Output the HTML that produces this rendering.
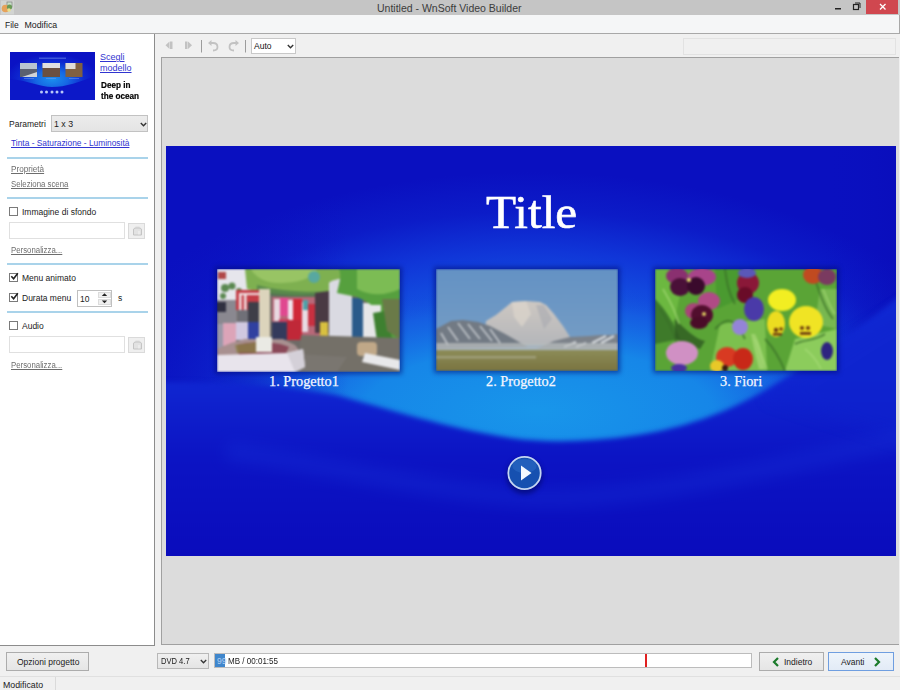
<!DOCTYPE html>
<html><head><meta charset="utf-8">
<style>
*{margin:0;padding:0;box-sizing:border-box}
html,body{width:900px;height:690px;overflow:hidden;background:#f0f0f0;font-family:"Liberation Sans",sans-serif;font-size:8.5px;color:#1a1a1a}
.a{position:absolute}
.t{position:absolute;white-space:nowrap;line-height:1}
#titlebar{left:0;top:0;width:900px;height:15px;background:#c5c5c5}
#menubar{left:0;top:15px;width:900px;height:19px;background:#f5f6f7;border-bottom:1px solid #a8a8a8;border-right:1px solid #a8a8a8}
#left{left:0;top:34px;width:155px;height:612px;background:#fff;border-right:1px solid #8c8c8c;border-bottom:1px solid #8c8c8c}
#preview{left:161px;top:57px;width:738px;height:588px;background:#dcdcdc;border-top:1px solid #a0a0a0;border-left:1px solid #a0a0a0;border-bottom:1px solid #a0a0a0}
#slide{left:166px;top:146px;width:730px;height:410px;background:#0a0ec0;overflow:hidden}
.lnk{color:#3034d0;text-decoration:underline}
.glnk{color:#6d6d6d;text-decoration:underline}
.sep{position:absolute;left:7px;width:141px;height:2px;background:#a9d3ea}
.cb{position:absolute;left:9px;width:9px;height:9px;border:1px solid #7a7a7a;background:#fff}
.tb{position:absolute;left:9px;width:116px;height:17px;border:1px solid #e0e0e0;background:#fff}
.bb{position:absolute;left:128px;width:17px;height:16px;border:1px solid #dadada;background:#efefef}
.btn{position:absolute;border:1px solid #acacac;background:linear-gradient(#f0f0f0,#e5e5e5);}
.cap{position:absolute;font-family:"Liberation Serif",serif;color:#f4f6ff;font-size:14.3px;white-space:nowrap;line-height:1;-webkit-text-stroke:0.25px #f4f6ff}
</style></head><body>
<div id="titlebar" class="a">
  <div class="t" style="left:377px;top:2.5px;font-size:10.5px;color:#3c3c3c">Untitled - WnSoft Video Builder</div>
</div>
<div id="menubar" class="a">
  <div class="t" style="left:5px;top:6px">File</div>
  <div class="t" style="left:24.5px;top:6px;font-size:8.8px">Modifica</div>
</div>
<div id="left" class="a">
  <svg class="a" style="left:10px;top:18px" width="85" height="48" viewBox="0 0 85 48">
    <defs>
      <radialGradient id="tg" cx="42" cy="27" r="46" gradientUnits="userSpaceOnUse" gradientTransform="translate(42 27) scale(1 0.55) translate(-42 -27)">
        <stop offset="0" stop-color="#1a90ee"/><stop offset="0.35" stop-color="#1668e4"/><stop offset="0.7" stop-color="#0e28d0"/><stop offset="1" stop-color="#0a12c4"/>
      </radialGradient>
      <filter id="tb" color-interpolation-filters="sRGB"><feGaussianBlur stdDeviation="0.35"/></filter>
    </defs>
    <rect width="85" height="48" fill="url(#tg)"/>
    <path d="M0,27 C20,29 30,35 42,35 C56,35 70,30 85,24 L85,48 L0,48Z" fill="#0c18c8" filter="url(#tb)"/>
    <rect x="29" y="5.5" width="27" height="1.5" fill="#8aa4f0" opacity="0.4"/>
    <g filter="url(#tb)">
    <rect x="10" y="11" width="17" height="14" fill="#5a6070"/>
    <rect x="10" y="11" width="17" height="6" fill="#b8c4d0"/>
    <path d="M12,25 L27,20 L27,25Z" fill="#d0d4d8"/>
    <rect x="32.5" y="11" width="17.5" height="14" fill="#6a5040"/>
    <rect x="32.5" y="11" width="17.5" height="5" fill="#e0e0e0"/>
    <rect x="55.5" y="11" width="17" height="14" fill="#806040"/>
    <rect x="55.5" y="11" width="10" height="6" fill="#e0dcd8"/>
    </g>
    <g fill="#7a9af0" opacity="0.5"><rect x="14" y="26" width="10" height="1"/><rect x="36" y="26" width="10" height="1"/><rect x="59" y="26" width="10" height="1"/></g>
    <g fill="#b8c8f8"><circle cx="31.5" cy="40" r="1.5"/><circle cx="36.5" cy="40" r="1.5"/><circle cx="42" cy="40" r="1.5"/><circle cx="47" cy="40" r="1.5"/><circle cx="52" cy="40" r="1.5"/></g>
  </svg>
  <div class="t lnk" style="left:100px;top:19px;font-size:9px">Scegli</div>
  <div class="t lnk" style="left:100px;top:30px;font-size:9px">modello</div>
  <div class="t" style="left:100.5px;top:46.5px;font-size:8.6px;font-weight:bold;color:#000;-webkit-text-stroke:0.2px #000;transform:scaleX(0.95);transform-origin:0 0">Deep in</div>
  <div class="t" style="left:100.5px;top:57.5px;font-size:8.6px;font-weight:bold;color:#000;-webkit-text-stroke:0.2px #000;transform:scaleX(0.95);transform-origin:0 0">the ocean</div>

  <div class="t" style="left:9px;top:86px">Parametri</div>
  <div class="a" style="left:51px;top:81px;width:97px;height:17px;border:1px solid #c2c2c2;background:linear-gradient(#ececec,#e4e4e4)">
    <div class="t" style="left:2px;top:4px;font-size:8.8px">1 x 3</div>
    <svg class="a" style="left:88px;top:6px" width="7" height="5" viewBox="0 0 7 5"><path d="M0.8,1 L3.5,3.8 L6.2,1" fill="none" stroke="#333" stroke-width="1.4"/></svg>
  </div>
  <div class="t lnk" style="left:11px;top:105px;font-size:8.4px">Tinta - Saturazione - Luminosità</div>
  <div class="sep" style="top:123px"></div>
  <div class="t glnk" style="left:11px;top:131px;font-size:8.5px;transform:scaleX(0.96);transform-origin:0 0">Proprietà</div>
  <div class="t glnk" style="left:11px;top:145.5px;font-size:8.5px;transform:scaleX(0.92);transform-origin:0 0">Seleziona scena</div>
  <div class="sep" style="top:163px"></div>

  <div class="cb" style="top:173px"></div>
  <div class="t" style="left:22px;top:174px">Immagine di sfondo</div>
  <div class="tb" style="top:188px"></div>
  <div class="bb" style="top:189px"><svg class="a" style="left:3px;top:1px" width="11" height="12" viewBox="0 0 11 12"><path d="M1.5,5 C1.5,3.5 2.5,3 4,3 L7,3 C8.5,3 9.5,3.5 9.5,5 L9.5,10 L1.5,10 Z" fill="#e2e2e2" stroke="#c4c4c4" stroke-width="1"/><path d="M3.5,2.2 L7.5,2.2" stroke="#d0d0d0" stroke-width="1"/><path d="M7,6 L7,9.5" stroke="#f4f4f4" stroke-width="1"/></svg></div>
  <div class="t glnk" style="left:11px;top:211.5px;font-size:8.5px;transform:scaleX(0.92);transform-origin:0 0">Personalizza...</div>
  <div class="sep" style="top:229px"></div>

  <div class="cb" style="top:239px"></div>
  <svg class="a" style="left:10px;top:238px" width="9" height="9" viewBox="0 0 9 9"><path d="M1.3,4.3 L3.6,6.8 L7.8,1.2" fill="none" stroke="#222" stroke-width="1.6"/></svg>
  <div class="t" style="left:22px;top:240px">Menu animato</div>
  <div class="cb" style="top:259px"></div>
  <svg class="a" style="left:10px;top:258px" width="9" height="9" viewBox="0 0 9 9"><path d="M1.3,4.3 L3.6,6.8 L7.8,1.2" fill="none" stroke="#222" stroke-width="1.6"/></svg>
  <div class="t" style="left:22px;top:260px">Durata menu</div>
  <div class="a" style="left:77px;top:256px;width:35px;height:17px;border:1px solid #c0c0c0;background:#fff">
    <div class="t" style="left:2px;top:3.5px;color:#222">10</div>
    <div class="a" style="left:20px;top:1px;width:13px;height:6px;border:1px solid #dcdcdc;background:#f0f0f0"></div>
    <div class="a" style="left:20px;top:8px;width:13px;height:6px;border:1px solid #dcdcdc;background:#f0f0f0"></div>
    <svg class="a" style="left:20px;top:0px" width="13" height="15" viewBox="0 0 13 15"><path d="M3.8,5 L6.5,2.2 L9.2,5Z M3.8,9.5 L9.2,9.5 L6.5,12.3Z" fill="#222"/></svg>
  </div>
  <div class="t" style="left:118px;top:260px">s</div>
  <div class="sep" style="top:277px"></div>

  <div class="cb" style="top:287px"></div>
  <div class="t" style="left:22px;top:288px">Audio</div>
  <div class="tb" style="top:302px"></div>
  <div class="bb" style="top:303px"><svg class="a" style="left:3px;top:1px" width="11" height="12" viewBox="0 0 11 12"><path d="M1.5,5 C1.5,3.5 2.5,3 4,3 L7,3 C8.5,3 9.5,3.5 9.5,5 L9.5,10 L1.5,10 Z" fill="#e2e2e2" stroke="#c4c4c4" stroke-width="1"/><path d="M3.5,2.2 L7.5,2.2" stroke="#d0d0d0" stroke-width="1"/><path d="M7,6 L7,9.5" stroke="#f4f4f4" stroke-width="1"/></svg></div>
  <div class="t glnk" style="left:11px;top:326.5px;font-size:8.5px;transform:scaleX(0.92);transform-origin:0 0">Personalizza...</div>
</div>
<div id="preview" class="a"></div>
<div id="slide" class="a">
<svg width="730" height="410" viewBox="0 0 730 410" style="position:absolute;left:0;top:0">
<defs>
  <radialGradient id="rgTop" cx="365" cy="290" r="480" gradientUnits="userSpaceOnUse" gradientTransform="translate(365 290) scale(1 0.55) translate(-365 -290)">
    <stop offset="0" stop-color="#1e8ef0"/>
    <stop offset="0.25" stop-color="#1474ea"/>
    <stop offset="0.5" stop-color="#1458e2"/>
    <stop offset="0.7" stop-color="#1036d8"/>
    <stop offset="0.85" stop-color="#0c1cc8"/>
    <stop offset="1" stop-color="#0a10c0"/>
  </radialGradient>
  <linearGradient id="lgEdge" x1="0" y1="0" x2="730" y2="0" gradientUnits="userSpaceOnUse">
    <stop offset="0" stop-color="#0a10c0" stop-opacity="0.75"/>
    <stop offset="0.12" stop-color="#0a10c0" stop-opacity="0.5"/>
    <stop offset="0.25" stop-color="#0a10c0" stop-opacity="0"/>
    <stop offset="0.9" stop-color="#0a10c0" stop-opacity="0"/>
    <stop offset="1" stop-color="#0a0cb8" stop-opacity="0.5"/>
  </linearGradient>
  <radialGradient id="rgBand" cx="372" cy="265" r="350" gradientUnits="userSpaceOnUse" gradientTransform="translate(372 265) scale(1 0.36) translate(-372 -265)">
    <stop offset="0" stop-color="#1896ea"/>
    <stop offset="0.5" stop-color="#1688e8" stop-opacity="0.95"/>
    <stop offset="0.8" stop-color="#1664e2" stop-opacity="0.5"/>
    <stop offset="1" stop-color="#1240d8" stop-opacity="0"/>
  </radialGradient>
  <linearGradient id="lgDark" x1="0" y1="230" x2="0" y2="410" gradientUnits="userSpaceOnUse">
    <stop offset="0" stop-color="#1028d2"/>
    <stop offset="0.45" stop-color="#0c14c4"/>
    <stop offset="1" stop-color="#0a0cbc"/>
  </linearGradient>
  <filter id="blur3" filterUnits="userSpaceOnUse" x="-60" y="-60" width="850" height="530" color-interpolation-filters="sRGB"><feGaussianBlur stdDeviation="2.5"/></filter>
  <filter id="blur6" filterUnits="userSpaceOnUse" x="-60" y="-60" width="850" height="530" color-interpolation-filters="sRGB"><feGaussianBlur stdDeviation="8"/></filter>
  <filter id="shadow" filterUnits="userSpaceOnUse" x="-60" y="-60" width="850" height="530" color-interpolation-filters="sRGB"><feGaussianBlur stdDeviation="2.5"/></filter>
</defs>
<rect width="730" height="410" fill="#0a12c4"/>
<rect width="730" height="410" fill="url(#rgTop)"/>
<rect width="730" height="410" fill="url(#rgBand)"/>
<rect width="730" height="410" fill="url(#lgEdge)"/>
<path d="M-20,236 C60,236 120,240 170,249 C220,262 280,282 345,292 C400,300 480,292 527,276 C570,263 610,240 660,205 C690,185 720,160 760,130 L760,430 L-20,430 Z" fill="url(#lgDark)" filter="url(#blur3)"/>
<path d="M600,250 C640,225 680,195 760,150 L760,300 Z" fill="#0e22ce" opacity="0.5" filter="url(#blur6)"/>
<path d="M60,305 C160,318 260,345 365,352 C470,356 600,322 740,292" fill="none" stroke="#1a3ade" stroke-width="18" opacity="0.3" filter="url(#blur6)"/>
<!-- photo shadows -->
<g fill="#000870" opacity="0.55" filter="url(#shadow)">
  <rect x="49" y="121" width="187" height="107"/>
  <rect x="268" y="121" width="186" height="106"/>
  <rect x="487" y="121" width="186" height="106"/>
</g>
<!-- play button -->
<g transform="translate(358.5 327)">
  <circle r="18" fill="#000660" opacity="0.6" filter="url(#blur3)" cy="3"/>
  <circle r="16.2" fill="#1650b0" stroke="#c4d6f2" stroke-width="1.8"/>
  <ellipse cx="0" cy="-7" rx="12" ry="7" fill="#3f86d8" opacity="0.3"/>
  <path d="M-3.5,-7.6 L7,0 L-3.5,7.6 Z" fill="#f4f8ff"/>
</g>
</svg>
<div class="t" style="left:319.5px;top:43.5px;font-family:'Liberation Serif',serif;font-size:46px;color:#fff;-webkit-text-stroke:0.6px #fff;transform:scaleX(1.07);transform-origin:0 0">Title</div>
<div class="cap" style="left:103px;top:227.5px">1. Progetto1</div>
<div class="cap" style="left:320px;top:227.5px">2. Progetto2</div>
<div class="cap" style="left:554px;top:227.5px">3. Fiori</div>
<svg class="a" id="ph1" style="left:51px;top:123px" width="183" height="103" viewBox="0 0 183 103">
<defs><filter id="pb1" color-interpolation-filters="sRGB"><feGaussianBlur stdDeviation="0.8"/></filter></defs>
<g filter="url(#pb1)">
<rect width="183" height="103" fill="#6e6a66"/>
<!-- sky / upper left -->
<rect x="0" y="0" width="40" height="34" fill="#e6e6ec"/>
<rect x="1" y="3" width="8" height="7" fill="#b04848"/>
<!-- tree canopy -->
<path d="M28,0 L135,0 L135,26 C120,28 100,24 85,26 C70,26 50,24 30,20 Z" fill="#7eb050"/>
<path d="M34,0 L100,0 C96,10 80,14 62,14 C48,14 38,8 34,0Z" fill="#98c464"/>
<path d="M40,16 C60,22 90,24 120,22 L120,30 C90,30 60,28 40,24Z" fill="#4a7a48" opacity="0.7"/>
<ellipse cx="97" cy="8" rx="6" ry="6" fill="#58a8a0"/>
<g fill="#5a8850"><circle cx="8" cy="19" r="4"/><circle cx="15" cy="17" r="3.5"/><circle cx="22" cy="22" r="3"/><circle cx="6" cy="27" r="3"/></g>
<!-- left bottom gray -->
<rect x="0" y="31" width="20" height="24" fill="#8a8890"/>
<rect x="0" y="33" width="9" height="10" fill="#303040"/>
<!-- door frame -->
<rect x="19" y="21" width="24" height="20" fill="#c43c46"/>
<rect x="22" y="25" width="2.5" height="16" fill="#f2e8ea"/>
<rect x="27" y="25" width="2.5" height="16" fill="#f2e8ea"/>
<rect x="22" y="24" width="21" height="2" fill="#f2e8ea"/>
<rect x="21" y="41" width="22" height="12" fill="#707078"/>
<rect x="31" y="33" width="12" height="22" fill="#3e3e48"/>
<!-- merchandise -->
<rect x="55" y="28" width="48" height="40" fill="#b86878"/>
<rect x="57" y="30" width="6" height="22" fill="#e8d8e0"/>
<rect x="63" y="29" width="8" height="18" fill="#e04890"/>
<rect x="71" y="31" width="5" height="26" fill="#f0e4ec"/>
<rect x="76" y="30" width="9" height="36" fill="#d02838"/>
<rect x="85" y="33" width="6" height="30" fill="#e8dce4"/>
<rect x="91" y="35" width="7" height="22" fill="#c83040"/>
<rect x="86" y="31" width="5" height="10" fill="#50a0a8"/>
<rect x="62" y="50" width="10" height="18" fill="#c84060"/>
<!-- dark figure -->
<path d="M98,24 L112,22 L112,64 L98,64Z" fill="#4a3a44"/>
<rect x="103" y="53" width="8" height="14" fill="#d8c040"/>
<!-- white wall, blue door -->
<path d="M112,14 C115,10 130,8 135,12 L135,72 L112,72Z" fill="#dadae2"/>
<rect x="135" y="29" width="11" height="43" fill="#2a5a8a"/>
<rect x="146" y="34" width="16" height="41" fill="#e4e4e6"/>
<!-- vines -->
<path d="M122,0 L183,0 L183,98 L172,92 C168,80 165,60 162,45 C158,36 148,32 140,28 L120,24 C122,14 125,8 122,0Z" fill="#56a03e"/>
<path d="M140,0 L183,0 L183,20 C170,26 155,28 140,20Z" fill="#7cbc54"/>
<rect x="146" y="36" width="18" height="40" fill="#e6e6e8"/>
<path d="M156,44 L168,42 L180,88 L162,86Z" fill="#3e8030"/>
<path d="M165,30 L183,30 L183,70 L170,62Z" fill="#6a7a48"/>
<!-- people -->
<rect x="0" y="55" width="6" height="28" fill="#9a98a8"/>
<rect x="6" y="54" width="13" height="23" fill="#dca4b8"/>
<rect x="19" y="53" width="12" height="18" fill="#d0c8e0"/>
<rect x="31" y="53" width="11" height="17" fill="#3040a0"/>
<rect x="55" y="53" width="17" height="18" fill="#343a5c"/>
<rect x="70" y="51" width="14" height="20" fill="#c02838"/>
<!-- column -->
<rect x="42" y="20" width="11" height="52" fill="#dcd4bc"/>
<!-- ground -->
<path d="M84,66 L183,69 L183,103 L80,103 Z" fill="#747068"/>
<path d="M80,85 L130,88 L120,103 L80,103Z" fill="#7a7670"/>
<rect x="140" y="73" width="20" height="14" fill="#c0a888" rx="4"/>
<path d="M148,84 L183,91 L183,101 L145,93 Z" fill="#e8e8ea"/>
<!-- basin -->
<path d="M14,74 L28,70 L66,70 L78,76 L86,86 L0,88 L0,80Z" fill="#a89090"/>
<path d="M20,76 C34,72 60,72 72,78 L68,86 L22,86Z" fill="#8a4858"/>
<path d="M18,76 L40,73 L40,84 L20,84Z" fill="#8a8048" opacity="0.8"/>
<rect x="39" y="68" width="16" height="15" fill="#eaeae4"/>
<path d="M0,86 L70,84 L86,80 L88,98 L78,103 L0,103 Z" fill="#e8e4ec"/>
<path d="M70,84 L86,80 L88,98 L78,103Z" fill="#d4d0d8"/>
</g>
</svg>
<svg class="a" id="ph2" style="left:270px;top:123px" width="182" height="102" viewBox="0 0 182 102">
<defs>
<linearGradient id="sky2" x1="0" y1="0" x2="0" y2="1"><stop offset="0" stop-color="#6492c4"/><stop offset="0.7" stop-color="#749cc4"/><stop offset="1" stop-color="#86a8c8"/></linearGradient>
<linearGradient id="mt2" x1="0" y1="0" x2="0" y2="1"><stop offset="0" stop-color="#cec8c2"/><stop offset="1" stop-color="#b4b6ba"/></linearGradient>
<linearGradient id="gr2" x1="0" y1="0" x2="0" y2="1"><stop offset="0" stop-color="#8c8c58"/><stop offset="1" stop-color="#7a7440"/></linearGradient>
<filter id="pb2" color-interpolation-filters="sRGB"><feGaussianBlur stdDeviation="0.8"/></filter>
</defs>
<g filter="url(#pb2)">
<rect width="182" height="102" fill="url(#sky2)"/>
<path d="M50,52 L60,46 L70,38 L76,33 L90,32 L104,33 L110,36 L118,45 L127,57 L134,68 L140,76 L48,76 Z" fill="url(#mt2)"/>
<path d="M76,33 L90,32 L95,45 L86,58 L78,48 Z" fill="#ddd6cc" opacity="0.7"/>
<path d="M100,36 L108,36 L116,50 L108,60Z" fill="#a8aab0" opacity="0.6"/>
<path d="M0,60 L15,52 L27,51 L42,53 L54,57 L71,66 L83,73 L92,78 L0,80 Z" fill="#727a84"/>
<g stroke="#d0d4d8" stroke-width="1.6" opacity="0.85">
<path d="M12,58 L22,72"/><path d="M22,54 L34,70"/><path d="M32,55 L44,70"/><path d="M44,57 L56,72"/><path d="M54,60 L64,74"/><path d="M5,64 L12,76"/>
</g>
<path d="M118,72 L134,68 L153,67 L165,66 L175,66 L182,65 L182,80 L100,80Z" fill="#7c828a"/>
<g stroke="#e0e4e8" stroke-width="2" opacity="0.9">
<path d="M156,74 L170,67"/><path d="M165,74 L178,67"/><path d="M128,78 L140,73"/><path d="M140,78 L150,74"/>
</g>
<path d="M0,74 L182,74 L182,81 L0,81Z" fill="#b8bcbc" opacity="0.75"/>
<rect x="0" y="81" width="182" height="21" fill="url(#gr2)"/>
<rect x="0" y="87" width="100" height="2.5" fill="#b0b098" opacity="0.6"/>
</g>
</svg>
<svg class="a" id="ph3" style="left:489px;top:123px" width="182" height="102" viewBox="0 0 182 102">
<defs><filter id="pb3" color-interpolation-filters="sRGB"><feGaussianBlur stdDeviation="0.9"/></filter></defs>
<g filter="url(#pb3)">
<rect width="182" height="102" fill="#5aa436"/>
<path d="M0,0 L30,0 L20,50 L0,70Z" fill="#6cb840"/>
<path d="M60,0 L90,0 L85,30 L62,40Z" fill="#4a9a30"/>
<path d="M0,30 C10,40 20,55 25,70 L0,75Z" fill="#3e7a2a"/>
<path d="M65,55 L110,50 L112,102 L55,102Z" fill="#7cc04e"/>
<path d="M140,70 L182,60 L182,102 L130,102Z" fill="#8ccc5c"/>
<path d="M165,20 L182,20 L182,60 L160,55Z" fill="#78b850"/>
<path d="M20,50 C30,60 40,70 50,72 L45,80 L20,70Z" fill="#2e5a22" opacity="0.8"/>
<path d="M100,65 C105,75 108,85 110,100 L104,100 C100,85 98,75 96,65Z" fill="#a8d878" opacity="0.7"/>
<g stroke="#3a7028" stroke-width="2" fill="none" opacity="0.7">
<path d="M5,40 C12,50 18,62 22,75"/><path d="M60,60 C70,50 78,45 90,70"/><path d="M110,70 C120,80 125,90 130,102"/><path d="M160,10 C165,25 170,40 178,50"/><path d="M70,0 C72,15 74,25 80,35"/><path d="M140,75 C150,70 160,72 170,65"/>
</g>
<g stroke="#a8dc78" stroke-width="1.6" fill="none" opacity="0.7">
<path d="M8,20 C14,30 20,40 24,55"/><path d="M100,70 C105,80 108,90 112,100"/><path d="M150,80 C158,86 162,92 166,100"/><path d="M168,20 C172,30 176,40 180,45"/>
</g>
<!-- pansy A -->
<ellipse cx="22" cy="7" rx="11" ry="8" fill="#8a3070"/>
<ellipse cx="47" cy="8" rx="14" ry="9" fill="#a8448a"/>
<ellipse cx="25" cy="18" rx="10" ry="9" fill="#4a1038"/>
<ellipse cx="41" cy="17" rx="9" ry="9" fill="#3a0a2c"/>
<circle cx="34" cy="11" r="2" fill="#e8e070"/>
<!-- pansy B -->
<ellipse cx="54" cy="32" rx="11" ry="9" fill="#b04a86"/>
<ellipse cx="39" cy="42" rx="9" ry="8" fill="#a84478"/>
<ellipse cx="47" cy="46" rx="11" ry="10" fill="#520e2e"/>
<ellipse cx="44" cy="54" rx="9" ry="6" fill="#4a0c28"/>
<circle cx="49" cy="45" r="2" fill="#e0d060"/>
<!-- dark red pansy -->
<ellipse cx="93" cy="14" rx="11" ry="11" fill="#8a1838"/>
<ellipse cx="90" cy="26" rx="8" ry="8" fill="#6a0c28"/>
<!-- violet -->
<ellipse cx="99" cy="40" rx="10" ry="12" fill="#4a3aa8"/>
<ellipse cx="85" cy="58" rx="8" ry="8" fill="#9484d8"/>
<ellipse cx="92" cy="4" rx="9" ry="5" fill="#5a58b8"/>
<!-- yellow pansies -->
<ellipse cx="127" cy="31" rx="14" ry="11" fill="#f2ee22"/>
<ellipse cx="121" cy="55" rx="9" ry="13" fill="#ecdc20"/>
<ellipse cx="151" cy="53" rx="17" ry="16" fill="#f0e424"/>
<g fill="#6a3a10"><circle cx="121" cy="61" r="2.2"/><circle cx="126" cy="60" r="1.8"/><rect x="118" y="64" width="9" height="2.5"/>
<circle cx="147" cy="59" r="2"/><circle cx="153" cy="59" r="2"/><rect x="145" y="63" width="11" height="2.8"/></g>
<!-- red/orange pansy -->
<ellipse cx="72" cy="88" rx="11" ry="10" fill="#d83a22"/>
<ellipse cx="88" cy="90" rx="10" ry="11" fill="#c82818"/>
<ellipse cx="62" cy="97" rx="7" ry="6" fill="#e8c828"/>
<circle cx="70" cy="99" r="3" fill="#3a1a10"/>
<!-- pink -->
<ellipse cx="27" cy="84" rx="16" ry="12" fill="#d090c4"/>
<ellipse cx="24" cy="99" rx="8" ry="4" fill="#4a30a0"/>
<!-- small dark purple -->
<ellipse cx="172" cy="82" rx="6" ry="9" fill="#2e2480"/>
<!-- top right -->
<ellipse cx="158" cy="6" rx="10" ry="9" fill="#c04a20"/>
<ellipse cx="172" cy="8" rx="9" ry="8" fill="#7a3a60"/>
</g>
</svg>
</div>
<svg class="a" style="left:0px;top:0px" width="16" height="15" viewBox="0 0 16 15">
  <defs><filter id="icb" color-interpolation-filters="sRGB"><feGaussianBlur stdDeviation="0.6"/></filter></defs>
  <g filter="url(#icb)">
  <rect x="1" y="0.5" width="13" height="14" fill="#d2d4d2"/>
  <rect x="7" y="2" width="5" height="5" fill="#c8e0c8" stroke="#8a8a8a" stroke-width="0.8"/>
  <circle cx="5.5" cy="8.5" r="3.8" fill="#e6a25a"/>
  <circle cx="9.5" cy="7" r="2.6" fill="#6a9a58"/>
  <circle cx="9" cy="10" r="1.8" fill="#e8e08c"/>
  </g>
</svg>
<div class="a" style="left:866px;top:0;width:32px;height:14px;background:#d0474f"></div>
<svg class="a" style="left:866px;top:0" width="32" height="14" viewBox="0 0 32 14"><path d="M14,4 L19.5,9.5 M19.5,4 L14,9.5" stroke="#fff" stroke-width="1.3"/></svg>
<svg class="a" style="left:830px;top:0" width="34" height="14" viewBox="0 0 34 14">
  <rect x="5" y="8" width="6" height="1.5" fill="#222"/>
  <rect x="23.5" y="4.5" width="5" height="5" fill="none" stroke="#222" stroke-width="1.2"/>
  <path d="M25,3 L30,3 L30,8" fill="none" stroke="#222" stroke-width="1"/>
</svg>

<!-- toolbar -->
<svg class="a" style="left:160px;top:36px" width="140" height="20" viewBox="0 0 140 20">
  <g fill="#c2c2c2">
    <path d="M9.5,5.5 L9.5,13 L5.5,9.25Z"/><rect x="10" y="5.5" width="2.5" height="7.5"/>
    <rect x="25" y="5.5" width="2.5" height="7.5"/><path d="M28,5.5 L28,13 L32,9.25Z"/>
  </g>
  <rect x="41" y="4" width="1" height="12.5" fill="#9c9c9c"/>
  <g fill="none" stroke="#c2c2c2" stroke-width="1.8">
    <path d="M50,7 L53,7 C56,7 57.5,9 57.5,11 C57.5,13 56,14.5 53,14.5"/>
    <path d="M77,7 L74,7 C71,7 69.5,9 69.5,11 C69.5,13 71,14.5 74,14.5"/>
  </g>
  <path d="M48,7 L51.5,4 L51.5,10Z M79,7 L75.5,4 L75.5,10Z" fill="#c2c2c2"/>
  <rect x="85" y="4" width="1" height="12.5" fill="#9c9c9c"/>
</svg>
<div class="a" style="left:251px;top:38px;width:45px;height:16px;border:1px solid #c8c8c8;background:#fff">
  <div class="t" style="left:2px;top:3px;color:#111">Auto</div>
  <svg class="a" style="left:35px;top:4.5px" width="7" height="5" viewBox="0 0 7 5"><path d="M0.8,1 L3.5,3.8 L6.2,1" fill="none" stroke="#333" stroke-width="1.4"/></svg>
</div>
<div class="a" style="left:683px;top:38px;width:213px;height:17px;border:1px solid #e2e2e2;background:#f0f0f0"></div>

<!-- bottom bar -->
<div class="btn" style="left:6px;top:652px;width:83px;height:19px">
  <div class="t" style="left:10px;top:5px">Opzioni progetto</div>
</div>
<div class="a" style="left:157px;top:653px;width:52px;height:16px;border:1px solid #b8b8b8;background:linear-gradient(#f0f0f0,#e4e4e4)">
  <div class="t" style="left:3px;top:3px;font-size:8.5px;transform:scaleX(0.89);transform-origin:0 0">DVD 4.7</div>
  <svg class="a" style="left:42px;top:4.5px" width="7" height="5" viewBox="0 0 7 5"><path d="M0.8,1 L3.5,3.8 L6.2,1" fill="none" stroke="#333" stroke-width="1.3"/></svg>
</div>
<div class="a" style="left:214px;top:653px;width:538px;height:15px;border:1px solid #bcbcbc;background:#fff">
  <div class="a" style="left:0;top:0;width:10px;height:13px;background:#3f86cc"></div>
  <div class="t" style="left:2px;top:2.5px;color:#b4d0f2">99</div>
  <div class="t" style="left:13px;top:2.5px;font-size:8.5px;transform:scaleX(0.945);transform-origin:0 0">MB / 00:01:55</div>
  <div class="a" style="left:430px;top:0;width:2px;height:13px;background:#e02020"></div>
</div>
<div class="btn" style="left:759px;top:652px;width:65px;height:19px">
  <svg class="a" style="left:12px;top:4px" width="8" height="10" viewBox="0 0 8 10"><path d="M6,1 L2,5 L6,9" fill="none" stroke="#1a7a2a" stroke-width="2.2"/></svg>
  <div class="t" style="left:24px;top:5px">Indietro</div>
</div>
<div class="btn" style="left:828px;top:652px;width:66px;height:19px;border-color:#6f9ee0;background:linear-gradient(#eef4fb,#e2ebf6)">
  <div class="t" style="left:12px;top:5px">Avanti</div>
  <svg class="a" style="left:44px;top:4px" width="8" height="10" viewBox="0 0 8 10"><path d="M2,1 L6,5 L2,9" fill="none" stroke="#1a7a2a" stroke-width="2.2"/></svg>
</div>
<!-- status bar -->
<div class="a" style="left:0;top:676px;width:900px;height:14px;background:#f0f0f0;border-top:1px solid #e0e0e0"></div>
<div class="a" style="left:55px;top:677px;width:1px;height:13px;background:#dadada"></div>
<div class="t" style="left:3px;top:680.5px;font-size:8.8px">Modificato</div>
</body>
</html>
